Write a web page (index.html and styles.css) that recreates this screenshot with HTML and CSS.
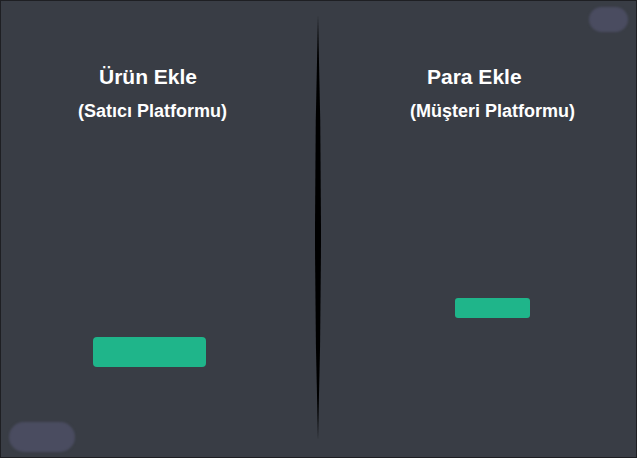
FILE: index.html
```html
<!DOCTYPE html>
<html lang="tr">
<head>
<meta charset="utf-8">
<title>Platform</title>
<link rel="stylesheet" href="styles.css">
</head>
<body>
<div class="frame">
  <section class="panel panel-left">
    <h1 class="title">Ürün Ekle</h1>
    <p class="subtitle">(Satıcı Platformu)</p>
    <button class="action action-large" type="button"></button>
  </section>
  <div class="divider">
    <svg width="6" height="425" viewBox="0 0 6 425" aria-hidden="true">
      <path d="M3 0 Q9 212.5 3 425 Q-3 212.5 3 0 Z" fill="#000"/>
    </svg>
  </div>
  <section class="panel panel-right">
    <h1 class="title">Para Ekle</h1>
    <p class="subtitle">(Müşteri Platformu)</p>
    <button class="action action-small" type="button"></button>
  </section>
  <div class="pill pill-top"></div>
  <div class="pill pill-bottom"></div>
</div>
</body>
</html>
```
FILE: styles.css
```css
html, body {
  margin: 0;
  padding: 0;
  background: #393d45;
}

.frame {
  position: relative;
  width: 635px;
  height: 456px;
  border: 1px solid #1e1f23;
  background: #393d45;
  display: flex;
  font-family: "Liberation Sans", Arial, sans-serif;
  color: #ffffff;
  overflow: hidden;
}

.panel {
  display: flex;
  flex-direction: column;
  align-items: flex-start;
  padding-top: 64px;
  box-sizing: border-box;
}

.panel-left {
  width: 314px;
}

.panel-right {
  width: 315px;
}

.title {
  margin: 0;
  font-size: 21px;
  line-height: 24px;
  font-weight: bold;
}

.subtitle {
  margin: 12px 0 0;
  font-size: 18px;
  line-height: 21px;
  font-weight: bold;
}

.panel-left .title { margin-left: 98px; }
.panel-left .subtitle { margin-left: 77px; }
.panel-right .title { margin-left: 106px; }
.panel-right .subtitle { margin-left: 89px; }

.action {
  border: none;
  padding: 0;
  background: #1fb58a;
  border-radius: 4px;
}

.action-large {
  width: 113px;
  height: 30px;
  margin: 215px 0 0 92px;
}

.action-small {
  width: 75px;
  height: 20px;
  margin: 176px 0 0 134px;
  border-radius: 3px;
}

.divider {
  width: 6px;
  padding-top: 14px;
  flex: none;
}

.divider svg {
  display: block;
}

.pill {
  position: absolute;
  background: #4a4c60;
  border-radius: 999px;
  filter: blur(1px);
}

.pill-top {
  left: 588px;
  top: 6px;
  width: 39px;
  height: 25px;
}

.pill-bottom {
  left: 8px;
  top: 421px;
  width: 66px;
  height: 30px;
}
```
